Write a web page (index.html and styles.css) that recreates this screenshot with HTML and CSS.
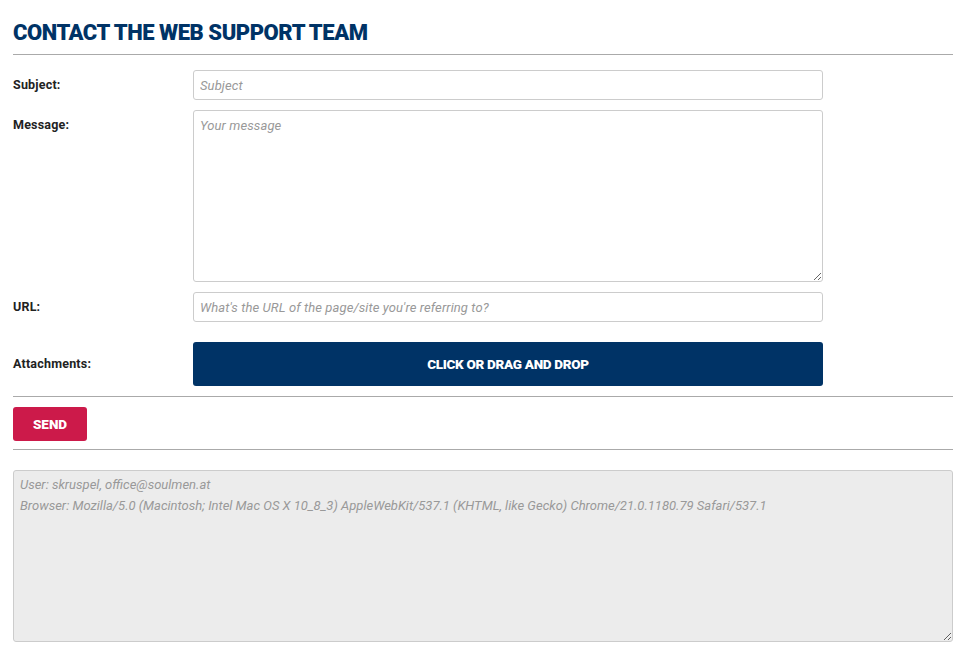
FILE: index.html
```html
<!DOCTYPE html>
<html>
<head>
<meta charset="utf-8">
<link rel="stylesheet" href="styles.css">
</head>
<body>
<div class="page">
  <h1 class="title">CONTACT THE WEB SUPPORT TEAM</h1>
  <form class="form">
    <div class="row">
      <label class="label">Subject:</label>
      <input class="field" type="text" placeholder="Subject">
    </div>
    <div class="row row-top">
      <label class="label label-top">Message:</label>
      <textarea class="field area" placeholder="Your message"></textarea>
    </div>
    <div class="row">
      <label class="label">URL:</label>
      <input class="field" type="text" placeholder="What's the URL of the page/site you're referring to?">
    </div>
    <div class="row row-attach">
      <label class="label">Attachments:</label>
      <button class="drop" type="button">CLICK OR DRAG AND DROP</button>
    </div>
    <div class="actions">
      <button class="send" type="button">SEND</button>
    </div>
    <textarea class="info" readonly>User: skruspel, office@soulmen.at
Browser: Mozilla/5.0 (Macintosh; Intel Mac OS X 10_8_3) AppleWebKit/537.1 (KHTML, like Gecko) Chrome/21.0.1180.79 Safari/537.1</textarea>
  </form>
</div>
</body>
</html>
```
FILE: styles.css
```css
* { box-sizing: border-box; }
body {
  margin: 0;
  background: #fff;
  font-family: Roboto, "Liberation Sans", sans-serif;
  color: #222;
}
.page {
  padding: 20px 6px 0 13px;
}
.title {
  margin: 0;
  font-family: Roboto, "Liberation Sans", sans-serif;
  font-weight: 900;
  font-size: 22px;
  line-height: 26px;
  letter-spacing: -0.45px;
  color: #003366;
  padding-bottom: 8px;
  border-bottom: 1px solid #aaa;
}
.form {
  display: flex;
  flex-direction: column;
  padding-top: 15px;
}
.row {
  display: flex;
  align-items: center;
  margin-bottom: 10px;
}
.row-top { align-items: flex-start; }
.label {
  width: 180px;
  flex: none;
  font-size: 12.5px;
  font-weight: 700;
  letter-spacing: 0.2px;
  color: #222;
  padding-bottom: 1px;
}
.label-top { padding-top: 7px; }
.field {
  width: 630px;
  height: 30px;
  border: 1px solid #ccc;
  border-radius: 3px;
  padding: 0 6px;
  font-family: Roboto, "Liberation Sans", sans-serif;
  font-style: italic;
  font-size: 13px;
  letter-spacing: 0.1px;
  color: #333;
  background: #fff;
  outline: none;
}
.field::placeholder { color: #999; }
.area {
  height: 172px;
  padding: 7px 6px;
  resize: vertical;
}
.row-attach {
  margin-top: 10px;
  margin-bottom: 10px;
}
.drop {
  width: 630px;
  height: 44px;
  border: none;
  border-radius: 3px;
  background: #003366;
  color: #fff;
  font-family: Roboto, "Liberation Sans", sans-serif;
  font-weight: 900;
  font-size: 13.5px;
  letter-spacing: -0.3px;
}
.actions {
  border-top: 1px solid #aaa;
  border-bottom: 1px solid #aaa;
  padding: 10px 0 8px;
  margin-bottom: 20px;
}
.send {
  display: block;
  width: 74px;
  height: 34px;
  border: none;
  border-radius: 3px;
  background: #cc1a4a;
  color: #fff;
  font-family: Roboto, "Liberation Sans", sans-serif;
  font-weight: 900;
  font-size: 13.5px;
}
.info {
  width: 940px;
  height: 172px;
  border: 1px solid #ccc;
  border-radius: 3px;
  background: #ececec;
  padding: 3px 6px;
  font-family: Roboto, "Liberation Sans", sans-serif;
  font-style: italic;
  font-size: 13px;
  line-height: 21px;
  color: #999;
  resize: vertical;
  outline: none;
}
```
